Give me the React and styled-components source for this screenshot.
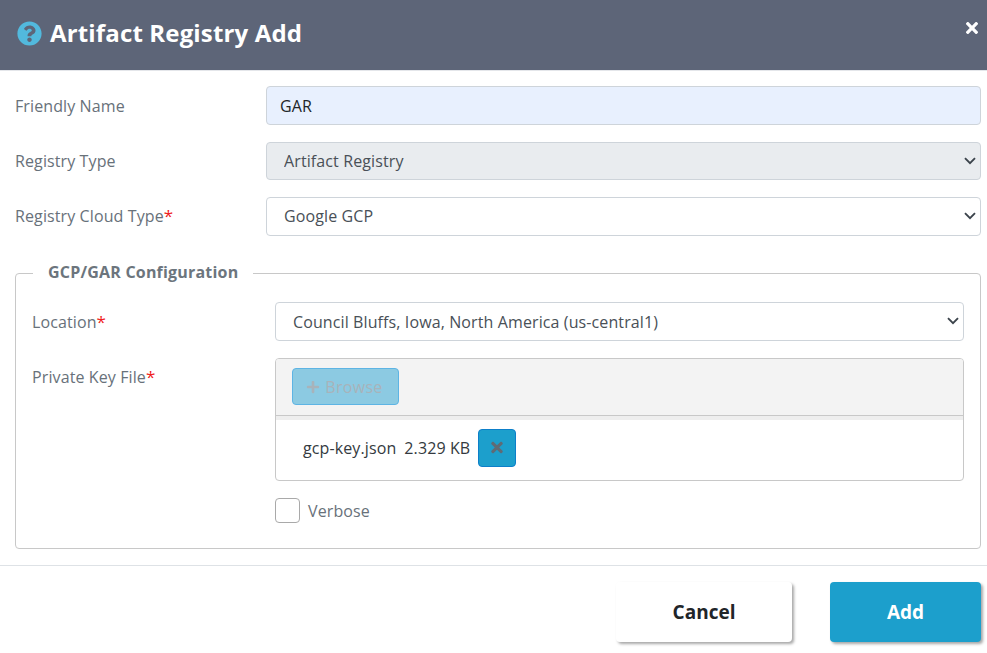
import styled, { createGlobalStyle } from "styled-components";
import { FaQuestionCircle, FaTimes, FaPlus } from "react-icons/fa";

const chevron = encodeURIComponent(
  '<svg xmlns="http://www.w3.org/2000/svg" width="12" height="8" viewBox="0 0 12 8"><path d="M1 1.2l5 5 5-5" fill="none" stroke="#3c444c" stroke-width="1.9"/></svg>'
);

const GlobalStyle = createGlobalStyle`
  html, body {
    margin: 0;
    padding: 0;
    background: #fff;
  }
  * {
    box-sizing: border-box;
  }
  body {
    font-family: "Open Sans", "Liberation Sans", sans-serif;
    font-size: 16px;
    letter-spacing: 0.11px;
    color: #212529;
  }
`;

const App = () => {
  return (
    <Modal>
      <GlobalStyle />
      <Header>
        <Title>
          <HelpIcon />
          Artifact Registry Add
        </Title>
        <CloseIcon />
      </Header>
      <Body>
        <FormRow>
          <Label $lower>Friendly Name</Label>
          <TextInput type="text" defaultValue="GAR" />
        </FormRow>
        <FormRow>
          <Label>Registry Type</Label>
          <Select disabled defaultValue="Artifact Registry">
            <option>Artifact Registry</option>
          </Select>
        </FormRow>
        <FormRow>
          <Label>
            Registry Cloud Type<Required>*</Required>
          </Label>
          <Select defaultValue="Google GCP">
            <option>Google GCP</option>
          </Select>
        </FormRow>

        <Fieldset>
          <Legend>GCP/GAR Configuration</Legend>
          <InnerRow>
            <InnerLabel $lower>
              Location<Required>*</Required>
            </InnerLabel>
            <Select $lower defaultValue="us-central1">
              <option value="us-central1">Council Bluffs, Iowa, North America (us-central1)</option>
            </Select>
          </InnerRow>
          <InnerRow>
            <InnerLabel>
              Private Key File<Required>*</Required>
            </InnerLabel>
            <Field>
              <Upload>
                <UploadBar>
                  <BrowseButton type="button">
                    <FaPlus />
                    Browse
                  </BrowseButton>
                </UploadBar>
                <UploadFiles>
                  <FileName>gcp-key.json</FileName>
                  <FileSize>2.329 KB</FileSize>
                  <RemoveButton type="button">
                    <FaTimes />
                  </RemoveButton>
                </UploadFiles>
              </Upload>
              <CheckRow>
                <Checkbox />
                <CheckLabel>Verbose</CheckLabel>
              </CheckRow>
            </Field>
          </InnerRow>
        </Fieldset>
      </Body>
      <Footer>
        <CancelButton type="button">Cancel</CancelButton>
        <AddButton type="button">Add</AddButton>
      </Footer>
    </Modal>
  );
};
export default App;

const Modal = styled.div`
  width: 987px;
  height: 653px;
  overflow: hidden;
  background: #fff;
`;

const Header = styled.div`
  height: 71px;
  background: #5d6578;
  border-bottom: 1px solid #e4e6ea;
  display: flex;
  align-items: center;
  justify-content: space-between;
  padding: 0 9px 4px 17px;
  color: #fff;
`;

const Title = styled.h4`
  margin: 0;
  display: flex;
  align-items: center;
  gap: 8px;
  font-size: 24px;
  font-weight: 700;
  line-height: 32px;
  letter-spacing: 0.15px;
`;

const HelpIcon = styled(FaQuestionCircle)`
  width: 25px;
  height: 25px;
  color: #52b9dd;
`;

const CloseIcon = styled(FaTimes)`
  width: 12px;
  height: 18px;
  margin-bottom: 11px;
  color: #fff;
`;

const Body = styled.div`
  padding: 15px 6px 0 15px;
`;

const FormRow = styled.div`
  display: grid;
  grid-template-columns: 251px 1fr;
  align-items: center;
  margin-bottom: 17px;
`;

const Label = styled.label`
  padding-top: ${(props) => (props.$lower ? "1px" : "0")};
  color: #68717a;
  font-size: 16px;
  line-height: 24px;
`;

const Required = styled.span`
  color: #f01c1c;
  font-size: 17px;
  line-height: 1;
`;

const TextInput = styled.input`
  height: 38.5px;
  width: 100%;
  padding: 1px 13px 0;
  border: 1px solid #ced4da;
  border-radius: 4px;
  background: #e8f0fe;
  color: #212529;
  font: inherit;
  letter-spacing: inherit;
`;

const Select = styled.select`
  height: 38.5px;
  width: 100%;
  padding: ${(props) => (props.$lower ? "1px" : "0")} 24px 0 17px;
  border: 1px solid #ced4da;
  border-radius: 4px;
  appearance: none;
  background: #fff url("data:image/svg+xml,${chevron}") no-repeat right 4px center;
  color: #495057;
  font: inherit;
  letter-spacing: inherit;
  opacity: 1;
  &:disabled {
    background-color: #e9ecef;
  }
`;

const Fieldset = styled.fieldset`
  margin: 26.5px 0 0;
  padding: 18px 16px 25px 16px;
  border: 1px solid #c8c8c8;
  border-radius: 4px;
  min-width: 0;
`;

const Legend = styled.legend`
  margin-left: 1px;
  padding: 0 15px 2px;
  font-size: 16px;
  font-weight: 700;
  line-height: 20px;
  letter-spacing: 0.2px;
  color: #6c757d;
`;

const InnerRow = styled.div`
  display: grid;
  grid-template-columns: 243px 1fr;
  align-items: start;
  margin-bottom: 17px;
  &:last-child {
    margin-bottom: 0;
  }
`;

const InnerLabel = styled(Label)`
  padding-top: ${(props) => (props.$lower ? "8px" : "7px")};
`;

const Field = styled.div`
  display: flex;
  flex-direction: column;
`;

const Upload = styled.div`
  border: 1px solid #c8c8c8;
  border-radius: 4px;
  overflow: hidden;
`;

const UploadBar = styled.div`
  height: 57px;
  padding: 9px 16px;
  background: #f3f3f3;
  border-bottom: 1px solid #c8c8c8;
`;

const BrowseButton = styled.button`
  width: 107px;
  height: 37.5px;
  display: inline-flex;
  align-items: center;
  justify-content: center;
  gap: 5px;
  padding: 1px 2px 0 0;
  border: 1px solid #5db4e4;
  border-radius: 4px;
  background: #8ccae2;
  color: #a8b3ba;
  font: inherit;
  letter-spacing: 0.3px;
  svg {
    width: 14px;
    height: 14px;
  }
`;

const UploadFiles = styled.div`
  height: 64px;
  display: flex;
  align-items: center;
  padding: 0 0 0 27px;
  box-shadow: inset 0 4px 0 #eeeeee;
`;

const FileName = styled.span`
  color: #343a40;
`;

const FileSize = styled.span`
  margin-left: 8px;
  color: #343a40;
`;

const RemoveButton = styled.button`
  width: 38px;
  height: 38px;
  margin-left: 8px;
  display: flex;
  align-items: center;
  justify-content: center;
  padding: 0;
  border: 1px solid #0d7fc9;
  border-radius: 4px;
  background: #1c9fcc;
  color: #5f6b76;
  svg {
    width: 12px;
    height: 17px;
  }
`;

const CheckRow = styled.div`
  display: flex;
  align-items: center;
  gap: 8px;
  margin-top: 17px;
`;

const Checkbox = styled.span`
  width: 25px;
  height: 25px;
  border: 1px solid #a9a9a9;
  border-radius: 4px;
  background: #fff;
`;

const CheckLabel = styled.span`
  padding-top: 1px;
  color: #68717a;
  line-height: 24px;
`;

const Footer = styled.div`
  margin-top: 16px;
  border-top: 1px solid #dee2e6;
  display: flex;
  justify-content: flex-end;
  gap: 38px;
  padding: 16px 6px 0 0;
`;

const FooterButton = styled.button`
  height: 60px;
  padding: 0;
  border: none;
  border-radius: 4px;
  font-family: inherit;
  font-size: 19px;
  font-weight: 700;
  box-shadow: 2px 2px 3px rgba(0, 0, 0, 0.35);
`;

const CancelButton = styled(FooterButton)`
  width: 176px;
  background: #fff;
  color: #212529;
`;

const AddButton = styled(FooterButton)`
  width: 151px;
  background: #1c9fcc;
  color: #fff;
`;
